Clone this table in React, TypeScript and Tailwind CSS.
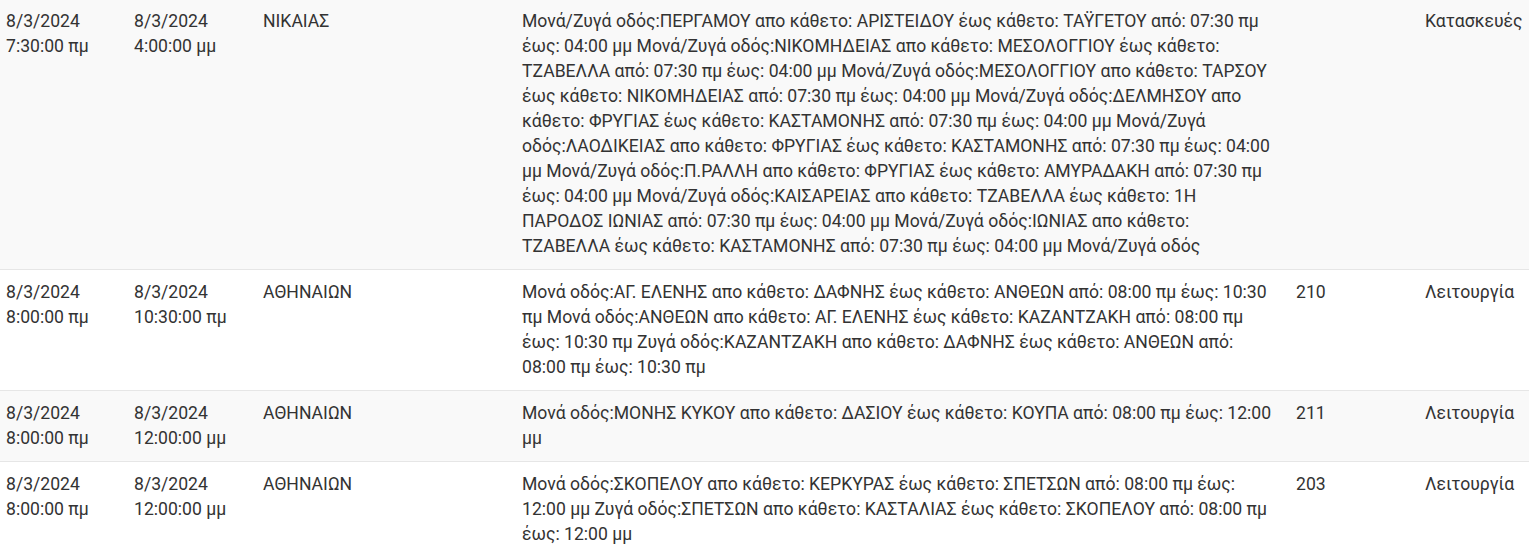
import React from "react";

type Row = { start: [string, string]; end: [string, string]; area: string; desc: string; num: string; kind: string };

const rows: Row[] = [
  {
    start: ["8/3/2024", "7:30:00 πμ"],
    end: ["8/3/2024", "4:00:00 μμ"],
    area: "ΝΙΚΑΙΑΣ",
    desc:
      "Μονά/Ζυγά οδός:ΠΕΡΓΑΜΟΥ απο κάθετο: ΑΡΙΣΤΕΙΔΟΥ έως κάθετο: ΤΑΫΓΕΤΟΥ από: 07:30 πμ έως: 04:00 μμ Μονά/Ζυγά οδός:ΝΙΚΟΜΗΔΕΙΑΣ απο κάθετο: ΜΕΣΟΛΟΓΓΙΟΥ έως κάθετο: ΤΖΑΒΕΛΛΑ από: 07:30 πμ έως: 04:00 μμ Μονά/Ζυγά οδός:ΜΕΣΟΛΟΓΓΙΟΥ απο κάθετο: ΤΑΡΣΟΥ έως κάθετο: ΝΙΚΟΜΗΔΕΙΑΣ από: 07:30 πμ έως: 04:00 μμ Μονά/Ζυγά οδός:ΔΕΛΜΗΣΟΥ απο κάθετο: ΦΡΥΓΙΑΣ έως κάθετο: ΚΑΣΤΑΜΟΝΗΣ από: 07:30 πμ έως: 04:00 μμ Μονά/Ζυγά οδός:ΛΑΟΔΙΚΕΙΑΣ απο κάθετο: ΦΡΥΓΙΑΣ έως κάθετο: ΚΑΣΤΑΜΟΝΗΣ από: 07:30 πμ έως: 04:00 μμ Μονά/Ζυγά οδός:Π.ΡΑΛΛΗ απο κάθετο: ΦΡΥΓΙΑΣ έως κάθετο: ΑΜΥΡΑΔΑΚΗ από: 07:30 πμ έως: 04:00 μμ Μονά/Ζυγά οδός:ΚΑΙΣΑΡΕΙΑΣ απο κάθετο: ΤΖΑΒΕΛΛΑ έως κάθετο: 1Η ΠΑΡΟΔΟΣ ΙΩΝΙΑΣ από: 07:30 πμ έως: 04:00 μμ Μονά/Ζυγά οδός:ΙΩΝΙΑΣ απο κάθετο: ΤΖΑΒΕΛΛΑ έως κάθετο: ΚΑΣΤΑΜΟΝΗΣ από: 07:30 πμ έως: 04:00 μμ Μονά/Ζυγά οδός",
    num: "",
    kind: "Κατασκευές",
  },
  {
    start: ["8/3/2024", "8:00:00 πμ"],
    end: ["8/3/2024", "10:30:00 πμ"],
    area: "ΑΘΗΝΑΙΩΝ",
    desc:
      "Μονά οδός:ΑΓ. ΕΛΕΝΗΣ απο κάθετο: ΔΑΦΝΗΣ έως κάθετο: ΑΝΘΕΩΝ από: 08:00 πμ έως: 10:30 πμ Μονά οδός:ΑΝΘΕΩΝ απο κάθετο: ΑΓ. ΕΛΕΝΗΣ έως κάθετο: ΚΑΖΑΝΤΖΑΚΗ από: 08:00 πμ έως: 10:30 πμ Ζυγά οδός:ΚΑΖΑΝΤΖΑΚΗ απο κάθετο: ΔΑΦΝΗΣ έως κάθετο: ΑΝΘΕΩΝ από: 08:00 πμ έως: 10:30 πμ",
    num: "210",
    kind: "Λειτουργία",
  },
  {
    start: ["8/3/2024", "8:00:00 πμ"],
    end: ["8/3/2024", "12:00:00 μμ"],
    area: "ΑΘΗΝΑΙΩΝ",
    desc: "Μονά οδός:ΜΟΝΗΣ ΚΥΚΟΥ απο κάθετο: ΔΑΣΙΟΥ έως κάθετο: ΚΟΥΠΑ από: 08:00 πμ έως: 12:00 μμ",
    num: "211",
    kind: "Λειτουργία",
  },
  {
    start: ["8/3/2024", "8:00:00 πμ"],
    end: ["8/3/2024", "12:00:00 μμ"],
    area: "ΑΘΗΝΑΙΩΝ",
    desc:
      "Μονά οδός:ΣΚΟΠΕΛΟΥ απο κάθετο: ΚΕΡΚΥΡΑΣ έως κάθετο: ΣΠΕΤΣΩΝ από: 08:00 πμ έως: 12:00 μμ Ζυγά οδός:ΣΠΕΤΣΩΝ απο κάθετο: ΚΑΣΤΑΛΙΑΣ έως κάθετο: ΣΚΟΠΕΛΟΥ από: 08:00 πμ έως: 12:00 μμ",
    num: "203",
    kind: "Λειτουργία",
  },
];

export default function App() {
  return (
    <div className="h-[556px] w-[1529px] overflow-hidden bg-white">
      <table
        className="mt-[-2px] w-[1529px] table-fixed border-collapse text-[17.6px] leading-[25px] text-[#333333]"
        style={{ fontFamily: "Roboto, 'Noto Sans', sans-serif" }}
      >
        <colgroup>
          <col className="w-[128px]" />
          <col className="w-[129px]" />
          <col className="w-[259px]" />
          <col className="w-[774px]" />
          <col className="w-[129px]" />
          <col className="w-[110px]" />
        </colgroup>
        <tbody>
          {rows.map((r, i) => (
            <tr key={i} className={`border-t border-[#e6e6e6] ${i % 2 === 0 ? "bg-[#f9f9f9]" : "bg-white"}`}>
              <td className="px-[6px] py-[10px] align-top">
                <div>{r.start[0]}</div>
                <div>{r.start[1]}</div>
              </td>
              <td className="px-[6px] py-[10px] align-top">
                <div>{r.end[0]}</div>
                <div>{r.end[1]}</div>
              </td>
              <td className="px-[6px] py-[10px] align-top">{r.area}</td>
              <td className="pl-[6px] pr-[14px] py-[10px] align-top">{r.desc}</td>
              <td className="px-[6px] py-[10px] align-top">{r.num}</td>
              <td className="px-[6px] py-[10px] align-top">{r.kind}</td>
            </tr>
          ))}
        </tbody>
      </table>
    </div>
  );
}
